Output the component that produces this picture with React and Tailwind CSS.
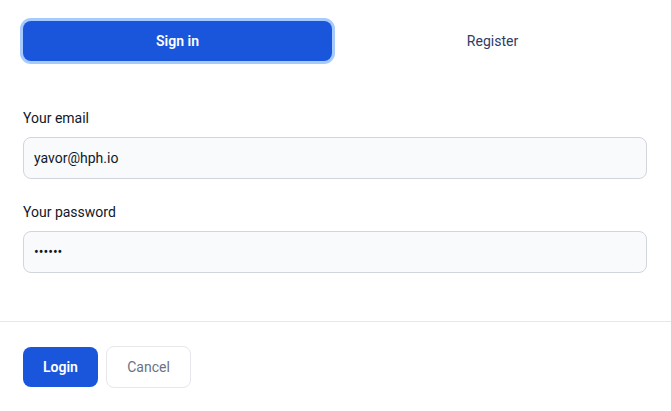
import React, {useState} from 'react'

function Field({label, type, value, onChange, className}) {
    return (
        <div className={className}>
            <label className="block mb-[9px] text-sm leading-5 text-gray-900">{label}</label>
            <input
                type={type}
                value={value}
                onChange={(e) => onChange(e.target.value)}
                className="block w-full rounded-lg border border-gray-300 bg-gray-50 px-[10px] py-2.5 text-sm leading-5 text-gray-900 outline-none"
            />
        </div>
    )
}

export default function App() {
    const [tab, setTab] = useState("signin")
    const [email, setEmail] = useState("yavor@hph.io")
    const [password, setPassword] = useState("secret")

    return (
        <div className="min-h-[411px] w-full bg-white" style={{fontFamily: 'Roboto, "Liberation Sans", sans-serif'}}>
            <div className="pl-[23px] pr-[24px] pt-[21px] pb-[48px]">
                {/* tabs */}
                <div className="grid grid-cols-2 gap-[6px]">
                    <button
                        onClick={() => setTab("signin")}
                        className={`h-10 rounded-lg text-sm ${tab === "signin" ? "bg-[#1a56db] text-white font-semibold ring-[3px] ring-[#a4cafe]" : "text-[#2f3b69]"}`}
                    >
                        Sign in
                    </button>
                    <button
                        onClick={() => setTab("register")}
                        className={`h-10 rounded-lg text-sm ${tab === "register" ? "bg-[#1a56db] text-white font-semibold ring-[3px] ring-[#a4cafe]" : "text-[#2f3b69]"}`}
                    >
                        Register
                    </button>
                </div>

                <Field className="mt-[47px]" label="Your email" type="email" value={email} onChange={setEmail} />
                <Field className="mt-[23px]" label="Your password" type="password" value={password} onChange={setPassword} />
            </div>

            <div className="border-t border-gray-200 px-[23px] pt-[24px] pb-6 flex items-center gap-2">
                <button className="h-10 w-[75px] rounded-lg bg-[#1a56db] text-sm font-semibold text-white">
                    Login
                </button>
                <button className="h-[42px] w-[85px] rounded-lg border border-gray-200 bg-white text-sm text-gray-500">
                    Cancel
                </button>
            </div>
        </div>
    )
}
